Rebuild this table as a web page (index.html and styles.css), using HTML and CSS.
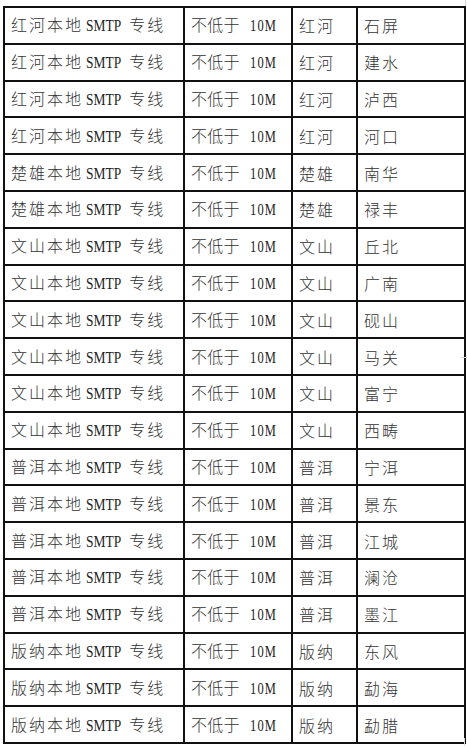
FILE: index.html
```html
<!DOCTYPE html>
<html lang="zh-CN">
<head>
<meta charset="utf-8">
<link rel="stylesheet" href="styles.css">
</head>
<body>
<div class="page">
<table class="grid">
<colgroup><col class="c1"><col class="c2"><col class="c3"><col class="c4"></colgroup>
<tbody>
<tr><td>红河本地<span class="lat">SMTP</span>专线</td><td class="rate">不低于<span class="lat num">10M</span></td><td>红河</td><td>石屏</td></tr>
<tr><td>红河本地<span class="lat">SMTP</span>专线</td><td class="rate">不低于<span class="lat num">10M</span></td><td>红河</td><td>建水</td></tr>
<tr><td>红河本地<span class="lat">SMTP</span>专线</td><td class="rate">不低于<span class="lat num">10M</span></td><td>红河</td><td>泸西</td></tr>
<tr><td>红河本地<span class="lat">SMTP</span>专线</td><td class="rate">不低于<span class="lat num">10M</span></td><td>红河</td><td>河口</td></tr>
<tr><td>楚雄本地<span class="lat">SMTP</span>专线</td><td class="rate">不低于<span class="lat num">10M</span></td><td>楚雄</td><td>南华</td></tr>
<tr><td>楚雄本地<span class="lat">SMTP</span>专线</td><td class="rate">不低于<span class="lat num">10M</span></td><td>楚雄</td><td>禄丰</td></tr>
<tr><td>文山本地<span class="lat">SMTP</span>专线</td><td class="rate">不低于<span class="lat num">10M</span></td><td>文山</td><td>丘北</td></tr>
<tr><td>文山本地<span class="lat">SMTP</span>专线</td><td class="rate">不低于<span class="lat num">10M</span></td><td>文山</td><td>广南</td></tr>
<tr><td>文山本地<span class="lat">SMTP</span>专线</td><td class="rate">不低于<span class="lat num">10M</span></td><td>文山</td><td>砚山</td></tr>
<tr><td>文山本地<span class="lat">SMTP</span>专线</td><td class="rate">不低于<span class="lat num">10M</span></td><td>文山</td><td>马关</td></tr>
<tr><td>文山本地<span class="lat">SMTP</span>专线</td><td class="rate">不低于<span class="lat num">10M</span></td><td>文山</td><td>富宁</td></tr>
<tr><td>文山本地<span class="lat">SMTP</span>专线</td><td class="rate">不低于<span class="lat num">10M</span></td><td>文山</td><td>西畴</td></tr>
<tr><td>普洱本地<span class="lat">SMTP</span>专线</td><td class="rate">不低于<span class="lat num">10M</span></td><td>普洱</td><td>宁洱</td></tr>
<tr><td>普洱本地<span class="lat">SMTP</span>专线</td><td class="rate">不低于<span class="lat num">10M</span></td><td>普洱</td><td>景东</td></tr>
<tr><td>普洱本地<span class="lat">SMTP</span>专线</td><td class="rate">不低于<span class="lat num">10M</span></td><td>普洱</td><td>江城</td></tr>
<tr><td>普洱本地<span class="lat">SMTP</span>专线</td><td class="rate">不低于<span class="lat num">10M</span></td><td>普洱</td><td>澜沧</td></tr>
<tr><td>普洱本地<span class="lat">SMTP</span>专线</td><td class="rate">不低于<span class="lat num">10M</span></td><td>普洱</td><td>墨江</td></tr>
<tr><td>版纳本地<span class="lat">SMTP</span>专线</td><td class="rate">不低于<span class="lat num">10M</span></td><td>版纳</td><td>东风</td></tr>
<tr><td>版纳本地<span class="lat">SMTP</span>专线</td><td class="rate">不低于<span class="lat num">10M</span></td><td>版纳</td><td>勐海</td></tr>
<tr><td>版纳本地<span class="lat">SMTP</span>专线</td><td class="rate">不低于<span class="lat num">10M</span></td><td>版纳</td><td>勐腊</td></tr>
</tbody>
</table>
<span class="mark mark-top"></span>
<span class="mark mark-mid"></span>
<span class="mark mark-bot"></span>
</div>
</body>
</html>
```
FILE: styles.css
```css
html, body {
  margin: 0;
  padding: 0;
  background: #fff;
}
.page {
  position: relative;
  width: 467px;
  height: 748px;
  padding: 6px 0 0 3px;
  box-sizing: border-box;
}
.grid {
  border-collapse: collapse;
  table-layout: fixed;
  width: 461px;
  font-family: "Noto Sans CJK SC", "Liberation Serif", serif;
  font-size: 16px;
  color: #333;
  letter-spacing: 2px;
}
.c1 { width: 180px; }
.c2 { width: 108px; }
.c3 { width: 65px; }
.c4 { width: 108px; }
.grid td {
  border: 2px solid #111;
  height: 36.8px;
  box-sizing: border-box;
  padding: 0 0 0 6px;
  white-space: nowrap;
  line-height: 20px;
  font-weight: 300;
}
.grid td.rate {
  letter-spacing: 0.3px;
}
.lat {
  display: inline-block;
  font-family: "Liberation Serif", serif;
  font-size: 16px;
  font-weight: 400;
  letter-spacing: 0;
  transform: scaleX(0.84);
  transform-origin: 0 50%;
  margin: 0 1.5px 0 3px;
  color: #222;
}
.num {
  letter-spacing: 1.5px;
  transform: scaleX(0.78);
  margin: 0 -6px 0 10px;
}
.mark {
  position: absolute;
  background: #d8d8d8;
}
.mark-top {
  right: 1px;
  top: 0;
  width: 1px;
  height: 6px;
}
.mark-mid {
  right: 0;
  top: 357px;
  width: 6px;
  height: 1px;
}
.mark-bot {
  right: 2px;
  top: 738px;
  width: 1px;
  height: 8px;
}
```
